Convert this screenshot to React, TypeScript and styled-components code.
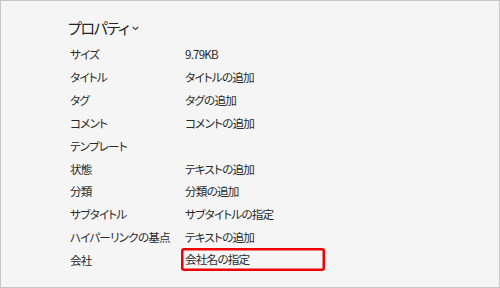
import React from "react";
import styled, { createGlobalStyle } from "styled-components";

const Global = createGlobalStyle`
  html, body { margin: 0; padding: 0; background: #f5f5f5; }
  body { width: 500px; height: 288px; overflow: hidden; }
`;

const Frame = styled.div`
  box-sizing: border-box;
  width: 500px;
  height: 288px;
  border: 1px solid #c6c6c6;
  background: #f5f5f5;
  padding: 16px 0 0 67px;
  font-family: "Noto Sans CJK JP", "Noto Sans", sans-serif;
  font-feature-settings: "palt";
  color: #2a2a2a;
`;

const Heading = styled.div`
  display: flex;
  align-items: center;
  gap: 4px;
  font-size: 15px;
  letter-spacing: -1.3px;
  line-height: 22px;
  height: 22px;
  color: #262626;
`;

const Grid = styled.div`
  display: grid;
  grid-template-columns: 114px 141px;
  grid-auto-rows: 22.85px;
  margin-top: 4px;
  font-size: 11.6px;
  letter-spacing: -0.8px;
  padding-left: 2px;
`;

const Label = styled.div`
  display: flex;
  align-items: center;
`;

const Value = styled.div<{ $highlight?: boolean }>`
  display: flex;
  align-items: center;
  padding-left: 4px;
  margin-left: -3px;
  border-radius: 3px;
  box-shadow: ${(p) => (p.$highlight ? "inset 0 0 0 2.5px #f00000" : "none")};
  margin-top: ${(p) => (p.$highlight ? "-1px" : "0")};
  height: ${(p) => (p.$highlight ? "23px" : "auto")};
`;

const rows: [string, string, boolean?][] = [
  ["サイズ", "9.79KB"],
  ["タイトル", "タイトルの追加"],
  ["タグ", "タグの追加"],
  ["コメント", "コメントの追加"],
  ["テンプレート", ""],
  ["状態", "テキストの追加"],
  ["分類", "分類の追加"],
  ["サブタイトル", "サブタイトルの指定"],
  ["ハイパーリンクの基点", "テキストの追加"],
  ["会社", "会社名の指定", true],
];

export default function App() {
  return (
    <>
      <Global />
      <Frame>
        <Heading>
          プロパティ
          <svg width="7" height="5" viewBox="0 0 7 5">
            <path d="M0.8 1 L3.5 3.6 L6.2 1" fill="none" stroke="#333" strokeWidth="1.1" />
          </svg>
        </Heading>
        <Grid>
          {rows.map(([l, v, h]) => (
            <React.Fragment key={l}>
              <Label>{l}</Label>
              <Value $highlight={h}>{v}</Value>
            </React.Fragment>
          ))}
        </Grid>
      </Frame>
    </>
  );
}
